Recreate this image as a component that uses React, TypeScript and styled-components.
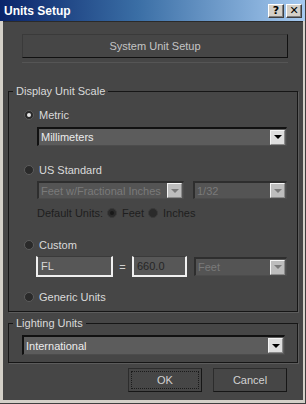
import React from 'react'
import styled, { createGlobalStyle } from 'styled-components'

const GlobalStyle = createGlobalStyle`
  html, body {
    margin: 0;
    padding: 0;
    background: #d4d0c8;
  }
  body {
    font-family: 'Liberation Sans', Arial, sans-serif;
    font-size: 11px;
  }
`

const Window = styled.div`
  width: 306px;
  height: 404px;
  display: flex;
  flex-direction: column;
  background: #d4d0c8;
  box-sizing: border-box;
  border-right: 1px solid #404040;
  border-bottom: 1px solid #404040;
`

const TitleBar = styled.div`
  height: 21px;
  display: flex;
  align-items: center;
  padding: 0 3px 0 4px;
  background: linear-gradient(to right, #0a246a 0%, #3a6ea5 45%, #a6caf0 100%);
  flex: none;
`

const Title = styled.div`
  flex: 1;
  color: #fff;
  font-weight: bold;
  font-size: 12px;
  font-family: 'Liberation Sans', Arial, sans-serif;
`

const CaptionButton = styled.div`
  width: 16px;
  height: 14px;
  margin-left: 2px;
  box-sizing: border-box;
  background: #d4d0c8;
  border-top: 1px solid #fff;
  border-left: 1px solid #fff;
  border-right: 1px solid #404040;
  border-bottom: 1px solid #404040;
  box-shadow: inset -1px -1px 0 #808080;
  display: flex;
  align-items: center;
  justify-content: center;
  color: #000;
  font-weight: bold;
  font-size: 11px;
  line-height: 1;
  font-family: 'DejaVu Sans', sans-serif;
`

const Body = styled.div`
  flex: 1;
  margin: 0 2px 3px 3px;
  background: #464646;
  display: flex;
  flex-direction: column;
  padding: 12px 5px 0 5px;
  border-top: 1px solid #2a2a2a;
`

const BigButton = styled.div`
  margin: 0 10px 0 14px;
  height: 24px;
  box-sizing: border-box;
  border: 1px solid #3a3a3a;
  border-bottom: 1px solid #111;
  border-right: 1px solid #111;
  display: flex;
  align-items: center;
  justify-content: center;
  color: #c4c4c4;
`

const Divider = styled.div`
  margin: 4px 10px 0 14px;
  height: 1px;
  background: #555;
`

const Group = styled.div<{ $top: number }>`
  position: relative;
  margin-top: ${(p) => p.$top}px;
  border: 1px solid #161616;
  box-shadow: 1px 1px 0 #5c5c5c;
  display: flex;
  flex-direction: column;
`

const Legend = styled.span`
  position: absolute;
  top: -8px;
  left: 4px;
  padding: 0 3px;
  background: #464646;
  color: #dadada;
  line-height: 14px;
`

const Row = styled.div<{ $top: number; $indent?: number }>`
  display: flex;
  align-items: center;
  height: 14px;
  margin-top: ${(p) => p.$top}px;
  padding-left: ${(p) => p.$indent ?? 15}px;
  color: #dadada;
  white-space: nowrap;
`

const Radio = styled.span<{ $on?: boolean; $dim?: boolean }>`
  width: 10px;
  height: 10px;
  box-sizing: border-box;
  border-radius: 50%;
  background: #2a2a2a;
  border: 1px solid ${(p) => (p.$dim ? '#3a3a3a' : '#5c5c5c')};
  margin-right: 5px;
  display: flex;
  align-items: center;
  justify-content: center;
  flex: none;
  &::after {
    content: '';
    width: 4px;
    height: 4px;
    border-radius: 50%;
    background: ${(p) => (p.$on ? (p.$dim ? '#181818' : '#e8e8e8') : 'transparent')};
  }
`

const DimLabel = styled.span`
  color: #1e1e1e;
  margin-right: 4px;
`

const Line = styled.div<{ $top: number; $left: number; $right: number }>`
  display: flex;
  align-items: center;
  margin: ${(p) => p.$top}px ${(p) => p.$right}px 0 ${(p) => p.$left}px;
`

const Select = styled.div<{ $h: number; $disabled?: boolean; $w?: number }>`
  height: ${(p) => p.$h}px;
  ${(p) => (p.$w ? `width: ${p.$w}px; flex: none;` : 'flex: 1;')}
  box-sizing: border-box;
  display: flex;
  align-items: center;
  background: ${(p) => (p.$disabled ? '#545454' : '#5c5c5c')};
  border-top: 2px solid ${(p) => (p.$disabled ? '#2e2e2e' : '#111')};
  border-left: 2px solid ${(p) => (p.$disabled ? '#2e2e2e' : '#111')};
  border-right: 1px solid #4c4c4c;
  border-bottom: 1px solid #4c4c4c;
  color: ${(p) => (p.$disabled ? '#7a7a7a' : '#ececec')};
  padding-left: 2px;
  padding-right: 1px;
`

const SelectText = styled.span`
  flex: 1;
  white-space: nowrap;
  overflow: hidden;
`

const Arrow = styled.span<{ $disabled?: boolean }>`
  width: 15px;
  height: 15px;
  flex: none;
  box-sizing: border-box;
  background: ${(p) => (p.$disabled ? '#bdbdbd' : '#dedede')};
  border-top: 1px solid #f4f4f4;
  border-left: 1px solid #f4f4f4;
  border-right: 1px solid #8a8a8a;
  border-bottom: 1px solid #8a8a8a;
  display: flex;
  align-items: center;
  justify-content: center;
  &::after {
    content: '';
    border-left: 4px solid transparent;
    border-right: 4px solid transparent;
    border-top: 4px solid ${(p) => (p.$disabled ? '#7a7a7a' : '#000')};
  }
`

const TextBox = styled.div<{ $w: number; $dark?: boolean }>`
  width: ${(p) => p.$w}px;
  height: 21px;
  flex: none;
  box-sizing: border-box;
  background: #575757;
  border-top: 1px solid #3a3a3a;
  border-left: 2px solid #f0f0f0;
  border-right: 2px solid #f0f0f0;
  border-bottom: 2px solid #f0f0f0;
  color: ${(p) => (p.$dark ? '#262626' : '#d8d8d8')};
  display: flex;
  align-items: center;
  padding-left: 3px;
`

const Equals = styled.span`
  color: #d0d0d0;
  width: 19px;
  text-align: center;
  flex: none;
`

const Spacer = styled.div<{ $w: number }>`
  width: ${(p) => p.$w}px;
  flex: none;
`

const Footer = styled.div`
  display: flex;
  justify-content: flex-end;
  gap: 11px;
  margin: 5px 11px 0 0;
`

const DialogButton = styled.div<{ $focus?: boolean }>`
  width: 74px;
  height: 24px;
  box-sizing: border-box;
  border: 1px solid #2c2c2c;
  border-right-color: #161616;
  border-bottom-color: #161616;
  display: flex;
  align-items: center;
  justify-content: center;
  color: #d2d2d2;
  position: relative;
  ${(p) =>
    p.$focus
      ? `&::before {
    content: '';
    position: absolute;
    inset: 2px;
    border: 1px dotted #1a1a1a;
  }`
      : ''}
`

export default function App() {
  return (
    <>
      <GlobalStyle />
      <Window>
        <TitleBar>
          <Title>Units Setup</Title>
          <CaptionButton>?</CaptionButton>
          <CaptionButton>✕</CaptionButton>
        </TitleBar>
        <Body>
          <BigButton>System Unit Setup</BigButton>
          <Divider />

          <Group $top={28}>
            <Legend>Display Unit Scale</Legend>
            <Row $top={16}>
              <Radio $on />
              Metric
            </Row>
            <Line $top={5} $left={28} $right={10}>
              <Select $h={19}>
                <SelectText>Millimeters</SelectText>
                <Arrow />
              </Select>
            </Line>

            <Row $top={17}>
              <Radio />
              US Standard
            </Row>
            <Line $top={4} $left={28} $right={10}>
              <Select $h={18} $disabled $w={147}>
                <SelectText>Feet w/Fractional Inches</SelectText>
                <Arrow $disabled />
              </Select>
              <Spacer $w={9} />
              <Select $h={18} $disabled>
                <SelectText>1/32</SelectText>
                <Arrow $disabled />
              </Select>
            </Line>
            <Row $top={7} $indent={28}>
              <DimLabel>Default Units:</DimLabel>
              <Radio $on $dim />
              <DimLabel>Feet</DimLabel>
              <Radio $dim />
              <DimLabel>Inches</DimLabel>
            </Row>

            <Row $top={18}>
              <Radio />
              Custom
            </Row>
            <Line $top={4} $left={27} $right={10}>
              <TextBox $w={77}>FL</TextBox>
              <Equals>=</Equals>
              <TextBox $w={55} $dark>
                660.0
              </TextBox>
              <Spacer $w={7} />
              <Select $h={19} $disabled>
                <SelectText>Feet</SelectText>
                <Arrow $disabled />
              </Select>
            </Line>

            <Row $top={13} style={{ marginBottom: 7 }}>
              <Radio />
              Generic Units
            </Row>
          </Group>

          <Group $top={11}>
            <Legend>Lighting Units</Legend>
            <Line $top={11} $left={13} $right={12} style={{ marginBottom: 7 }}>
              <Select $h={20}>
                <SelectText>International</SelectText>
                <Arrow />
              </Select>
            </Line>
          </Group>

          <Footer>
            <DialogButton $focus>OK</DialogButton>
            <DialogButton>Cancel</DialogButton>
          </Footer>
        </Body>
      </Window>
    </>
  )
}
